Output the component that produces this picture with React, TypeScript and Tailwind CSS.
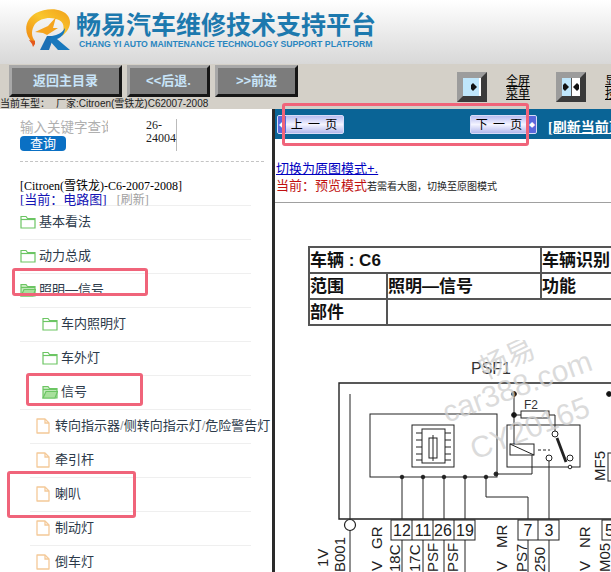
import type { ReactNode } from 'react'

const cjk = "font-['Liberation_Sans','Noto_Sans_CJK_SC',sans-serif]"
const serif = "font-['Liberation_Serif','Noto_Sans_CJK_SC',serif]"

function Logo() {
  return (
    <svg width="46" height="42" viewBox="0 0 46 42" className="shrink-0">
      <defs>
        <linearGradient id="ring" x1="0" y1="1" x2="1" y2="0">
          <stop offset="0" stopColor="#ee8410" />
          <stop offset="0.55" stopColor="#f9c62c" />
          <stop offset="1" stopColor="#f1a01a" />
        </linearGradient>
      </defs>
      <path d="M8 34 C-2 25 -1 11 11 4 C22 -2 38 -1 43 7 C47 13 45 21 37 27 C39 20 40 14 34 11 C26 7 15 9 10 15 C6 21 6 27 10 32 Z" fill="url(#ring)" />
      <path d="M4 31 L10 32 L10 35 L8 38 L7 35 Z" fill="#e4581c" />
      <path d="M10 23 L23 17 L31 8 L28 19 L33 19 L22 26 L18 24 Z" fill="#f5a41e" />
      <path d="M15 41 L22 27 L29 27 L24 41 Z" fill="#1b6fb5" />
      <path d="M27 27 C33 26 37 24 40 19 C40 24 37 28 32 30 L45 41 L33 41 L24 31 Z" fill="#1878bd" />
    </svg>
  )
}

function NavButton({ w, children }: { w: string; children: ReactNode }) {
  return (
    <div className={`${w} h-[32px] flex items-center justify-center bg-[#7c7c7c] border-[3px] border-t-[#a8a8a8] border-l-[#a8a8a8] border-r-[#161616] border-b-[#161616] text-[13px] font-bold text-[#c8e4f8]`}>
      {children}
    </div>
  )
}

function Diamond({ flip }: { flip?: boolean }) {
  return (
    <svg width="6" height="8" viewBox="0 0 6 8">
      <path d={flip ? 'M0 4 L4 0 L6 2 V6 L4 8 Z' : 'M6 4 L2 0 L0 2 V6 L2 8 Z'} fill="#111" />
    </svg>
  )
}

function IconButton({ double }: { double?: boolean }) {
  return (
    <div className="w-[30px] h-[30px] border-[6px] border-t-[#9c9c9c] border-l-[#9c9c9c] border-r-[#3a3a3a] border-b-[#3a3a3a] flex shrink-0">
      {double ? (
        <>
          <div className="flex-1 bg-[#bfe6fb] flex items-center justify-center border-r border-[#555]"><Diamond /></div>
          <div className="flex-1 bg-white flex items-center justify-center"><Diamond flip /></div>
        </>
      ) : (
        <div className="flex-1 bg-[#bfe6fb] flex items-center justify-end pr-[2px] border-r-2 border-white"><Diamond /></div>
      )}
    </div>
  )
}

function PageButton({ label, side }: { label: string; side: 'left' | 'right' }) {
  return (
    <div className="w-[67px] h-[19px] shrink-0 flex items-center rounded-[2px] border border-[#d8dcf8] bg-gradient-to-b from-[#b8bcf0] via-[#f4f4ff] to-[#b4b8ec] text-[12px] text-black overflow-hidden">
      {side === 'left' && <div className="w-[8px] h-full bg-[#5a68dc] flex items-center justify-center text-white text-[6px] leading-none">◆</div>}
      <span className="flex-1 text-center whitespace-nowrap tracking-[1px]">{label}</span>
      {side === 'right' && <div className="w-[8px] h-full bg-[#5a68dc] flex items-center justify-center text-white text-[6px] leading-none">◆</div>}
    </div>
  )
}

function FolderIcon({ open }: { open?: boolean }) {
  return (
    <svg width="16" height="14" viewBox="0 0 16 14" fill="none" stroke="#6cc563" strokeWidth="1.2" className="shrink-0">
      <path d="M1 13 V1.5 H6 L7.5 3.5 H15 V13 Z" fill={open ? '#c8ecbf' : 'white'} />
      <path d="M1 4.5 H15" />
      {open && <path d="M1 13 L4 6.5 H15.5 L13 13 Z" fill="#a8e09c" />}
    </svg>
  )
}

function FileIcon() {
  return (
    <svg width="14" height="16" viewBox="0 0 14 16" fill="none" stroke="#f4c998" strokeWidth="1.3" className="shrink-0">
      <path d="M1 1 H9 L13 5 V15 H1 Z" strokeLinejoin="round" />
      <path d="M9 1 V5 H13" />
    </svg>
  )
}

const rows: { label: ReactNode; kind: 'folder' | 'open' | 'file'; pad: string; line: string }[] = [
  { label: '基本看法', kind: 'folder', pad: 'pl-0', line: 'ml-0' },
  { label: '动力总成', kind: 'folder', pad: 'pl-0', line: 'ml-0' },
  { label: '照明—信号', kind: 'open', pad: 'pl-0', line: 'ml-0' },
  { label: '车内照明灯', kind: 'folder', pad: 'pl-[22px]', line: 'ml-0' },
  { label: '车外灯', kind: 'folder', pad: 'pl-[22px]', line: 'ml-0' },
  { label: '信号', kind: 'open', pad: 'pl-[22px]', line: 'ml-[7px]' },
  { label: <>转向指示器<span className="text-[#9aa0a6]">/</span>侧转向指示灯<span className="text-[#9aa0a6]">/</span>危险警告灯</>, kind: 'file', pad: 'pl-[16px]', line: 'ml-0' },
  { label: '牵引杆', kind: 'file', pad: 'pl-[16px]', line: 'ml-[10px]' },
  { label: '喇叭', kind: 'file', pad: 'pl-[16px]', line: 'ml-[10px]' },
  { label: '制动灯', kind: 'file', pad: 'pl-[16px]', line: 'ml-[10px]' },
  { label: '倒车灯', kind: 'file', pad: 'pl-[16px]', line: 'ml-[10px]' },
]

const pinLabels = [
  { x: 328, y: 567, t: '1V' }, { x: 345, y: 572, t: 'B001' }, { x: 382, y: 571, t: 'V' }, { x: 382, y: 549, t: 'GR' },
  { x: 400, y: 572, t: '18C' }, { x: 420, y: 572, t: '17C' }, { x: 438, y: 572, t: 'PSF' }, { x: 458, y: 572, t: 'PSF' },
  { x: 507, y: 571, t: 'V' }, { x: 507, y: 548, t: 'MR' }, { x: 527, y: 572, t: 'PS7' }, { x: 545, y: 572, t: '250' },
  { x: 590, y: 571, t: 'V' }, { x: 590, y: 548, t: 'NR' }, { x: 610, y: 572, t: 'M05' }, { x: 605, y: 481, t: 'MF5' },
]

function Wiring() {
  const lower = [
    { x: 402, t: '12' }, { x: 423, t: '11' }, { x: 443, t: '26' }, { x: 465, t: '19' },
  ]
  return (
    <svg width="311" height="232" viewBox="300 340 311 232" className={`block shrink-0 ${cjk}`} fill="none" stroke="#222" strokeWidth="1">
      <text x="471" y="374" fontSize="16" fill="#333" stroke="none">PSF1</text>
      <path d="M611 383 H339 V519 H611" strokeWidth="1.4" />
      <path d="M350 394 V519" />
      <circle cx="350" cy="525" r="5.5" fill="white" strokeWidth="1.2" />
      <path d="M350 530 V572" />
      <rect x="370" y="414" width="127" height="63" />
      <rect x="412" y="425" width="42" height="42" />
      <rect x="422" y="429" width="23" height="34" />
      <rect x="429" y="438" width="8" height="20" />
      <path d="M433 435 V461 M416 433 H422 M416 440 H422 M416 447 H422 M416 454 H422 M416 460 H422 M445 433 H451 M445 440 H451 M445 447 H451 M445 454 H451 M445 460 H451" />
      <path d="M402 477 V519 M423 477 V519 M444 477 V519 M465 477 V519 M486 477 V497 H528 V519" />
      {[402, 423, 444, 465, 486].map(x => <circle key={x} cx={x} cy="477" r="1.8" fill="#222" />)}
      <circle cx="496" cy="474" r="2" fill="#222" />
      <path d="M497 474 H532 V455" />
      <rect x="507" y="425" width="73" height="42" />
      <path d="M514 394 V444" />
      <circle cx="514" cy="394" r="2.4" fill="#111" />
      <circle cx="514" cy="415" r="2.4" fill="#111" />
      <path d="M514 415 H521 M549 415 H555 V431" />
      <rect x="521" y="411" width="28" height="7" />
      <text x="524" y="409" fontSize="12" fill="#333" stroke="none">F2</text>
      <rect x="510" y="444" width="24" height="11" />
      <path d="M510 444 L534 455" />
      <path d="M538 450 H550" strokeDasharray="3 2" />
      <circle cx="555" cy="434" r="3" fill="white" />
      <circle cx="549" cy="458" r="3" fill="white" />
      <circle cx="570" cy="458" r="3" fill="white" />
      <path d="M557 438 L566 462" strokeWidth="2.8" />
      <circle cx="570" cy="467" r="1.8" fill="white" />
      <path d="M549 461 V519" />
      <circle cx="609" cy="394" r="2.4" fill="#111" />
      <rect x="391" y="520" width="84" height="20" />
      <path d="M412 520 V540 M433 520 V540 M454 520 V540" />
      {lower.map(l => (
        <text key={l.t} x={l.x} y="536" fontSize="16" textAnchor="middle" fill="#222" stroke="none">{l.t}</text>
      ))}
      <rect x="518" y="520" width="41" height="20" />
      <path d="M538 520 V540" />
      <text x="528" y="536" fontSize="16" textAnchor="middle" fill="#222" stroke="none">7</text>
      <text x="549" y="536" fontSize="16" textAnchor="middle" fill="#222" stroke="none">3</text>
      <rect x="602" y="520" width="12" height="20" />
      <text x="605" y="536" fontSize="16" fill="#222" stroke="none">5</text>
      <path d="M402 540 V572 M423 540 V572 M444 540 V572 M465 540 V572 M528 540 V572 M549 540 V572" />
      <rect x="608" y="453" width="10" height="28" />
      {pinLabels.map(l => (
        <text key={`${l.x}-${l.y}`} x={l.x} y={l.y} fontSize="15" fill="#222" stroke="none" transform={`rotate(-90 ${l.x} ${l.y})`}>{l.t}</text>
      ))}
      <g fill="#d0d0d0" fillOpacity="0.75" stroke="none">
        <text fontSize="29" transform="translate(485 380) rotate(-25)">畅易</text>
        <text fontSize="30" transform="translate(447 423) rotate(-20)">car388.com</text>
        <text fontSize="30" transform="translate(475 460) rotate(-21)">CY20165</text>
      </g>
    </svg>
  )
}

export default function App() {
  return (
    <div className={`relative w-[611px] h-[572px] overflow-hidden bg-white ${cjk}`}>
      <div className="h-[64px] bg-gradient-to-b from-white to-[#d8d8d8] flex items-start pl-[25px] pt-[9px] gap-[5px]">
        <Logo />
        <div className="pt-[2px]">
          <div className="text-[25px] leading-[28px] font-bold text-[#1d79ae] whitespace-nowrap">畅易汽车维修技术支持平台</div>
          <div className="ml-[3px] text-[8.7px] leading-[11px] font-bold text-[#2a86c0] whitespace-nowrap">CHANG YI AUTO MAINTENANCE TECHNOLOGY SUPPORT PLATFORM</div>
        </div>
      </div>

      <div className="h-[45px] bg-[#d4d0c8]">
        <div className="h-[34px] flex pl-[9px] pt-[1px] items-start">
          <div className="flex gap-[5px] shrink-0">
            <NavButton w="w-[113px]">返回主目录</NavButton>
            <NavButton w="w-[83px]">&lt;&lt;后退.</NavButton>
            <NavButton w="w-[83px]">&gt;&gt;前进</NavButton>
          </div>
          <div className="flex shrink-0 pt-[7px] ml-[159px]">
            <IconButton />
            <div className="ml-[19px] w-[50px] text-[12px] leading-[13px] underline text-black pt-[3px]">全屏<br />菜单</div>
            <IconButton double />
            <div className="ml-[19px] text-[12px] leading-[13px] underline text-black pt-[3px]">显示<br />按钮</div>
          </div>
        </div>
        <div className="text-[10px] leading-[11px] text-[#222] whitespace-nowrap">当前车型：<span className="ml-[6px]">厂家:Citroen(雪铁龙)C62007-2008</span></div>
      </div>

      <div className="flex h-[463px]">
        <div className="w-[272px] shrink-0 pl-[20px] overflow-hidden">
          <div className="flex h-[52px] items-start pt-[10px]">
            <div className="w-[126px] shrink-0">
              <div className="w-[88px] h-[17px] pt-[1px] overflow-hidden whitespace-nowrap text-[13.5px] leading-[16px] text-[#b0b0b0]">输入关键字查询</div>
              <div className="w-[46px] h-[15px] rounded-[4px] bg-[#0a70c4] text-white text-[13px] leading-[15px] text-center">查询</div>
            </div>
            <div className={`w-[31px] h-[32px] border-r border-[#bbb] text-[12px] leading-[13px] text-[#222] ${serif}`}>26-<br />24004</div>
          </div>
          <div className="w-[244px] border-t border-dashed border-[#c4c4c4]" />
          <div className={`mt-[18px] text-[12px] leading-[13px] text-black whitespace-nowrap ${serif}`}>[Citroen(雪铁龙)-C6-2007-2008]</div>
          <div className={`h-[12px] text-[13px] leading-[13px] whitespace-nowrap ${serif}`}>
            <span className="text-[#1414b4]">[当前：电路图]</span>
            <span className="ml-[10px] text-[12px] text-[#a0a0a0]">[刷新]</span>
          </div>
          {rows.map((r, i) => (
            <div key={i} className="h-[34px] w-[231px]">
              <div className={`h-px bg-[#efefef] ${r.line}`} />
              <div className={`h-[33px] pb-[2px] flex items-center gap-[3px] whitespace-nowrap text-[13px] text-[#2c3a4a] ${r.pad}`}>
                {r.kind === 'file' ? <FileIcon /> : <FolderIcon open={r.kind === 'open'} />}
                <span className={r.kind === 'file' ? 'ml-[2px]' : ''}>{r.label}</span>
              </div>
            </div>
          ))}
        </div>

        <div className="w-[3px] shrink-0 bg-[#2a2a2a]" />

        <div className="flex-1 min-w-0 overflow-hidden">
          <div className="h-[30px] bg-[#0a6496] flex items-start pl-[2px] pt-[6px]">
            <PageButton label="上 一 页" side="left" />
            <div className="ml-[126px] shrink-0"><PageButton label="下 一 页" side="right" /></div>
            <span className={`ml-[11px] mt-[5px] shrink-0 text-[14px] leading-[15px] font-bold text-white underline whitespace-nowrap ${serif}`}>[刷新当前页]</span>
          </div>
          <div className="mt-[23px] pl-[1px] text-[13px] leading-[14px] text-[#0000c0] underline">切换为原图模式+.</div>
          <div className="mt-[2px] pl-[1px] text-[13px] leading-[15px] text-[#c01010] whitespace-nowrap">
            当前：预览模式<span className="text-[10px] text-[#222]">若需看大图，切换至原图模式</span>
          </div>
          <div className="mt-[8px] h-px bg-[#a0a0a0]" />
          <table className="ml-[33px] mt-[43px] w-[400px] table-fixed border-collapse border-2 border-[#555] text-[17px] font-bold text-[#111]">
            <colgroup>
              <col className="w-[78px]" />
              <col className="w-[154px]" />
              <col />
            </colgroup>
            <tbody>
              <tr className="h-[26px]">
                <td colSpan={2} className="border-2 border-[#555] px-0 leading-none">车辆 : C6</td>
                <td className="border-2 border-[#555] px-0 leading-none whitespace-nowrap">车辆识别</td>
              </tr>
              <tr className="h-[26px]">
                <td className="border-2 border-[#555] px-0 leading-none">范围</td>
                <td className="border-2 border-[#555] px-0 leading-none">照明—信号</td>
                <td className="border-2 border-[#555] px-0 leading-none">功能</td>
              </tr>
              <tr className="h-[26px]">
                <td className="border-2 border-[#555] px-0 leading-none">部件</td>
                <td colSpan={2} className="border-2 border-[#555]" />
              </tr>
            </tbody>
          </table>
          <div className="mt-[14px] ml-[25px]">
            <Wiring />
          </div>
        </div>
      </div>

      <div className="absolute left-[282px] top-[103px] w-[247px] h-[43px] border-[3px] border-[#f0647a] rounded-[3px]" />
      <div className="absolute left-[12px] top-[268px] w-[136px] h-[28px] border-[3px] border-[#f0647a] rounded-[3px]" />
      <div className="absolute left-[26px] top-[373px] w-[117px] h-[33px] border-[3px] border-[#f0647a] rounded-[3px]" />
      <div className="absolute left-[7px] top-[471px] w-[129px] h-[47px] border-[3px] border-[#f0647a] rounded-[3px]" />
    </div>
  )
}
